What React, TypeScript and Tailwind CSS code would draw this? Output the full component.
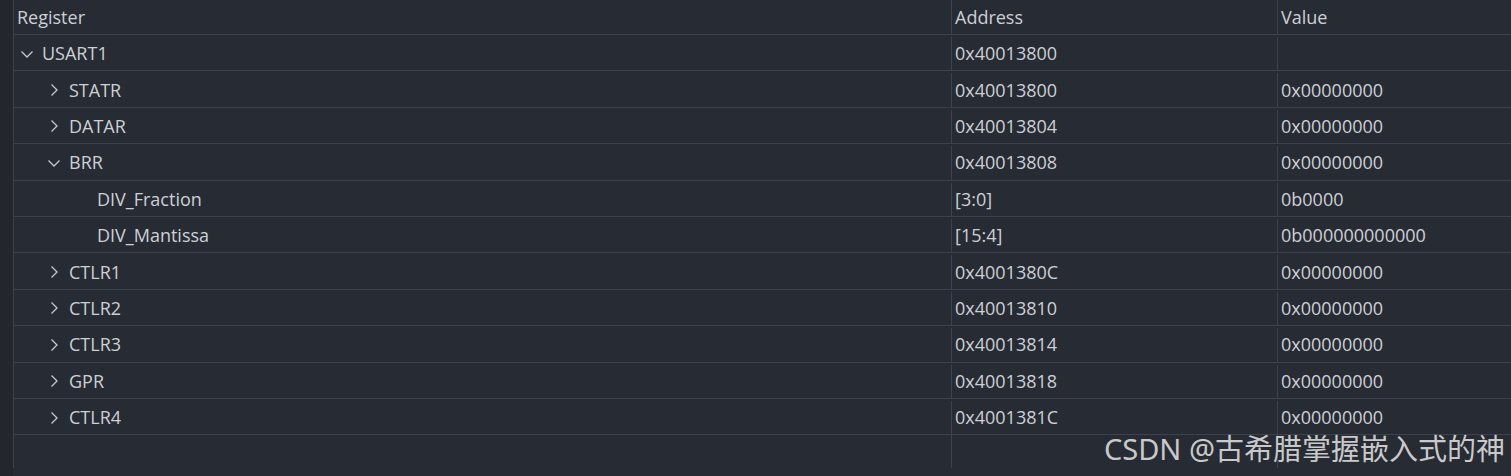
import React from "react";

type Row = {
  name: string;
  address: string;
  value: string;
  level: number;
  state?: "open" | "closed";
};

const rows: Row[] = [
  { name: "USART1", address: "0x40013800", value: "", level: 0, state: "open" },
  { name: "STATR", address: "0x40013800", value: "0x00000000", level: 1, state: "closed" },
  { name: "DATAR", address: "0x40013804", value: "0x00000000", level: 1, state: "closed" },
  { name: "BRR", address: "0x40013808", value: "0x00000000", level: 1, state: "open" },
  { name: "DIV_Fraction", address: "[3:0]", value: "0b0000", level: 2 },
  { name: "DIV_Mantissa", address: "[15:4]", value: "0b000000000000", level: 2 },
  { name: "CTLR1", address: "0x4001380C", value: "0x00000000", level: 1, state: "closed" },
  { name: "CTLR2", address: "0x40013810", value: "0x00000000", level: 1, state: "closed" },
  { name: "CTLR3", address: "0x40013814", value: "0x00000000", level: 1, state: "closed" },
  { name: "GPR", address: "0x40013818", value: "0x00000000", level: 1, state: "closed" },
  { name: "CTLR4", address: "0x4001381C", value: "0x00000000", level: 1, state: "closed" },
];

function Chevron({ open }: { open: boolean }) {
  return (
    <svg width="16" height="16" viewBox="0 0 16 16" fill="none" className="shrink-0">
      {open ? (
        <path d="M2.5 5.5 L8 11 L13.5 5.5" stroke="#c5c8ce" strokeWidth="1.3" />
      ) : (
        <path d="M5.5 2.5 L11 8 L5.5 13.5" stroke="#c5c8ce" strokeWidth="1.3" />
      )}
    </svg>
  );
}

export default function App() {
  const indent = ["pl-[5px]", "pl-[32px]", "pl-[83px]"];

  return (
    <div
      className="relative flex h-[476px] w-[1511px] overflow-hidden bg-[#272b33] text-[18px] text-[#cdd0d5]"
      style={{ fontFamily: '"Open Sans", "Noto Sans", sans-serif' }}
    >
      <div className="h-full w-[13px] shrink-0 bg-[#23262d]" />
      <div className="flex h-[468px] flex-1 flex-col border-l border-[#3c414c]">
        <div className="flex h-[35px] shrink-0 border-b border-[#3c414c]">
          <div className="flex w-[938px] items-center border-r border-[#3c414c] pl-[3px]">Register</div>
          <div className="flex w-[326px] items-center border-r border-[#3c414c] pl-[3px]">Address</div>
          <div className="flex flex-1 items-center pl-[3px]">Value</div>
        </div>
        {rows.map((r) => (
          <div key={r.name} className="flex h-[36.4px] shrink-0 border-b border-[#3c414c] pt-[2px]">
            <div className={`flex w-[938px] items-center gap-[7px] border-r border-[#3c414c] ${indent[r.level]}`}>
              {r.state && <Chevron open={r.state === "open"} />}
              <span>{r.name}</span>
            </div>
            <div className="flex w-[326px] items-center border-r border-[#3c414c] pl-[3px]">{r.address}</div>
            <div className="flex flex-1 items-center pl-[3px]">{r.value}</div>
          </div>
        ))}
        <div className="flex flex-1">
          <div className="w-[938px] border-r border-[#3c414c]" />
          <div className="w-[326px] border-r border-[#3c414c]" />
          <div className="flex-1" />
        </div>
      </div>
      <div
        className="absolute right-[6px] top-[434px] text-[29px] leading-none text-[#c9c9c9]"
        style={{ fontFamily: '"Noto Sans", "Noto Sans CJK SC", sans-serif' }}
      >
        CSDN @古希腊掌握嵌入式的神
      </div>
    </div>
  );
}
